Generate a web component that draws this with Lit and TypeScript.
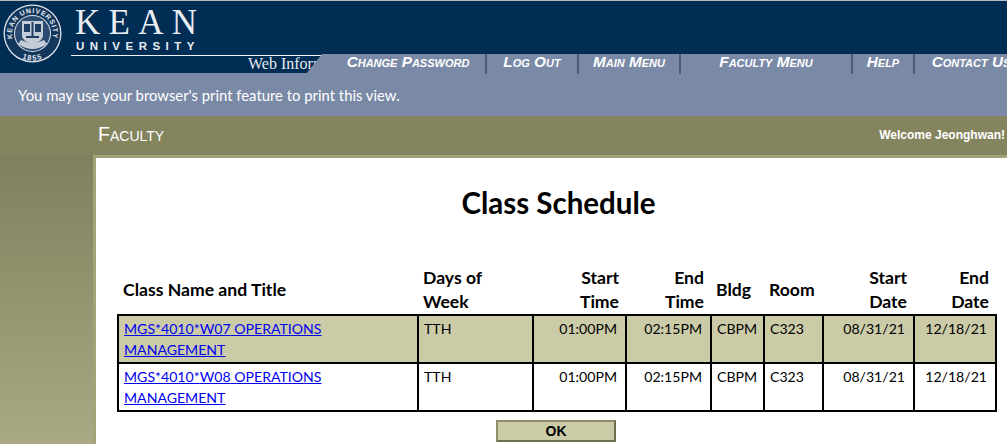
import { LitElement, html, css } from "lit";
import { customElement } from "lit/decorators.js";

const NAV: [string, number][] = [
  ["Change Password", 156],
  ["Log Out", 92],
  ["Main Menu", 102],
  ["Faculty Menu", 172],
  ["Help", 62],
  ["Contact Us", 112],
];
const ROWS = ["W07", "W08"];

@customElement("app-root")
export class AppRoot extends LitElement {
  static styles = css`
    :host { display: block; width: 1007px; height: 444px; overflow: hidden; font-family: "Lato", "Liberation Sans", sans-serif; background: #84845f; position: relative; }
    .header { height: 73px; background: #002d54; border-top: 1px solid #b9bcc0; box-sizing: border-box; position: relative; overflow: visible; z-index: 1; }
    .seal { position: absolute; left: 3px; top: 3px; width: 59px; height: 59px; }
    .brand { position: absolute; left: 71px; top: 0; width: 251px; height: 72px; color: #e9ecf2; }
    .kean { position: absolute; left: 4px; top: 4px; font: 35px/36px "Liberation Serif", serif; letter-spacing: 8.3px; white-space: nowrap; }
    .univ { position: absolute; left: 5px; top: 38px; font: bold 11.5px/14px "Liberation Sans", sans-serif; letter-spacing: 5.5px; white-space: nowrap; }
    .rule { position: absolute; left: 0; right: 0; top: 54px; height: 1px; background: #f2f4f8; }
    .web { position: absolute; left: 177px; top: 54px; font: 16px/18px "Liberation Serif", serif; color: #e8ebf0; white-space: nowrap; }
    .nav { position: absolute; left: 0; right: 0; top: 53px; height: 20px; display: flex; padding-left: 331px; background: #7a8aa6; clip-path: polygon(306px 100%, 322px 0, 100% 0, 100% 100%); }
    .nav a { box-sizing: border-box; flex: none; display: block; text-align: center; color: #fff; font: italic bold 15.3px/16px "Liberation Sans", sans-serif; font-variant: small-caps; border-right: 2px solid #4c5a78; white-space: nowrap; height: 20px; }
    .nav a:last-child { border-right: none; }
    .band { height: 43px; background: #7a8aa6; color: #fff; font-size: 14.85px; line-height: 45px; padding-left: 18px; box-sizing: border-box; }
    .bar { height: 39px; box-sizing: border-box; padding: 0 0 2px 98px; background: #84845f; display: flex; justify-content: space-between; align-items: center; color: #fff; }
    .bar .t { font: 19.6px "Liberation Sans", sans-serif; font-variant: small-caps; }
    .bar .w { font: bold 12px "Liberation Sans", sans-serif; margin-right: 2px; }
    .main { display: flex; height: 289px; background: linear-gradient(#80805f, #a9a983); }
    .content { margin-left: 93px; flex: 1; background: #fff; border: solid #a3a377; border-width: 3px 0 0 3px; padding: 0 0 0 21px; min-width: 0; }
    h1 { margin: 0; height: 107px; padding: 25px 7px 0 0; box-sizing: border-box; text-align: center; font-size: 29.5px; line-height: 40px; font-weight: 700; color: #000; }
    table { border-collapse: collapse; table-layout: fixed; width: 878px; color: #000; font-size: 14.1px; line-height: 21px; }
    th { font-weight: 700; padding: 1px 7px 0 5px; line-height: 24px; vertical-align: middle; font-size: 17.6px; text-align: left; }
    td { border: 2px solid #000; padding: 2px 8px 2px 5px; vertical-align: top; text-align: left; }
    th.r, td.r { text-align: right; }
    tr.alt td { background: #cbcba8; }
    a.l { color: #0000ee; text-decoration: underline; }
    .foot { display: flex; justify-content: center; width: 878px; padding-top: 8px; }
    button { width: 120px; height: 22px; padding: 0; background: #cbcba8; border: 2px solid; border-color: #8f8f6b #6f6f50 #6f6f50 #8f8f6b; font: bold 14px "Liberation Sans", sans-serif; color: #000; }
  `;

  render() {
    return html`
      <div class="header">
        <svg class="seal" viewBox="0 0 59 59">
          <defs>
            <path id="top" d="M11.750 39.750A20.500 20.500 0 1 1 47.250 39.750" />
            <path id="bottom" d="M12.150 50.200A27 27 0 0 0 46.850 50.200" />
          </defs>
          <circle cx="29.500" cy="29.500" r="29" fill="#dfe3ea" />
          <circle cx="29.500" cy="29.500" r="27.700" fill="#12365c" />
          <text font-family="Liberation Sans" font-weight="bold" font-size="7" fill="#e4e8ef" letter-spacing="0.700"><textPath href="#top" startOffset="50%" text-anchor="middle">KEAN UNIVERSITY</textPath></text>
          <text font-family="Liberation Sans" font-weight="bold" font-size="7.500" fill="#e4e8ef" letter-spacing="1.200"><textPath href="#bottom" startOffset="50%" text-anchor="middle">1855</textPath></text>
          <circle cx="29.500" cy="29.500" r="18.500" fill="#dfe3ea" />
          <circle cx="29.500" cy="29.500" r="17.500" fill="#2a4a70" />
          <path d="M15 40q14.500 10 29 0l-3-4q-11.500 6-23 0z" fill="#c4ccd8" />
          <path d="M19 17h21v15q0 5-10.500 8q-10.500-3-10.500-8z" fill="#c4ccd8" />
          <path d="M21 20h6v8h-6zM32 20h6v8h-6zM23 32h13v2h-13z" fill="#1d3d63" />
          <path d="M28.500 18h2v15h-2z" fill="#1d3d63" />
        </svg>
        <div class="brand">
          <div class="kean">KEAN</div>
          <div class="univ">UNIVERSITY</div>
          <div class="rule"></div>
          <div class="web">Web Information</div>
        </div>
        <nav class="nav">
          ${NAV.map(([t, w]) => html`<a style="width:${w}px">${t}</a>`)}
        </nav>
      </div>
      <div class="band">You may use your browser's print feature to print this view.</div>
      <div class="bar"><span class="t">Faculty</span><span class="w">Welcome Jeonghwan!</span></div>
      <div class="main">
        <div class="content">
          <h1>Class Schedule</h1>
          <table>
            <colgroup>
              <col style="width:300px" /><col style="width:115px" /><col style="width:93px" /><col style="width:85px" />
              <col style="width:53px" /><col style="width:59px" /><col style="width:91px" /><col style="width:82px" />
            </colgroup>
            <thead>
              <tr>
                <th>Class Name and Title</th><th>Days of<br />Week</th><th class="r">Start<br />Time</th><th class="r">End<br />Time</th>
                <th>Bldg</th><th>Room</th><th class="r">Start<br />Date</th><th class="r">End<br />Date</th>
              </tr>
            </thead>
            <tbody>
              ${ROWS.map((s, i) => html`
                <tr class=${i === 0 ? "alt" : ""}>
                  <td><a class="l" href="#">MGS*4010*${s} OPERATIONS MANAGEMENT</a></td>
                  <td>TTH</td><td class="r">01:00PM</td><td class="r">02:15PM</td><td>CBPM</td><td>C323</td>
                  <td class="r">08/31/21</td><td class="r">12/18/21</td>
                </tr>`)}
            </tbody>
          </table>
          <div class="foot"><button>OK</button></div>
        </div>
      </div>
    `;
  }
}
